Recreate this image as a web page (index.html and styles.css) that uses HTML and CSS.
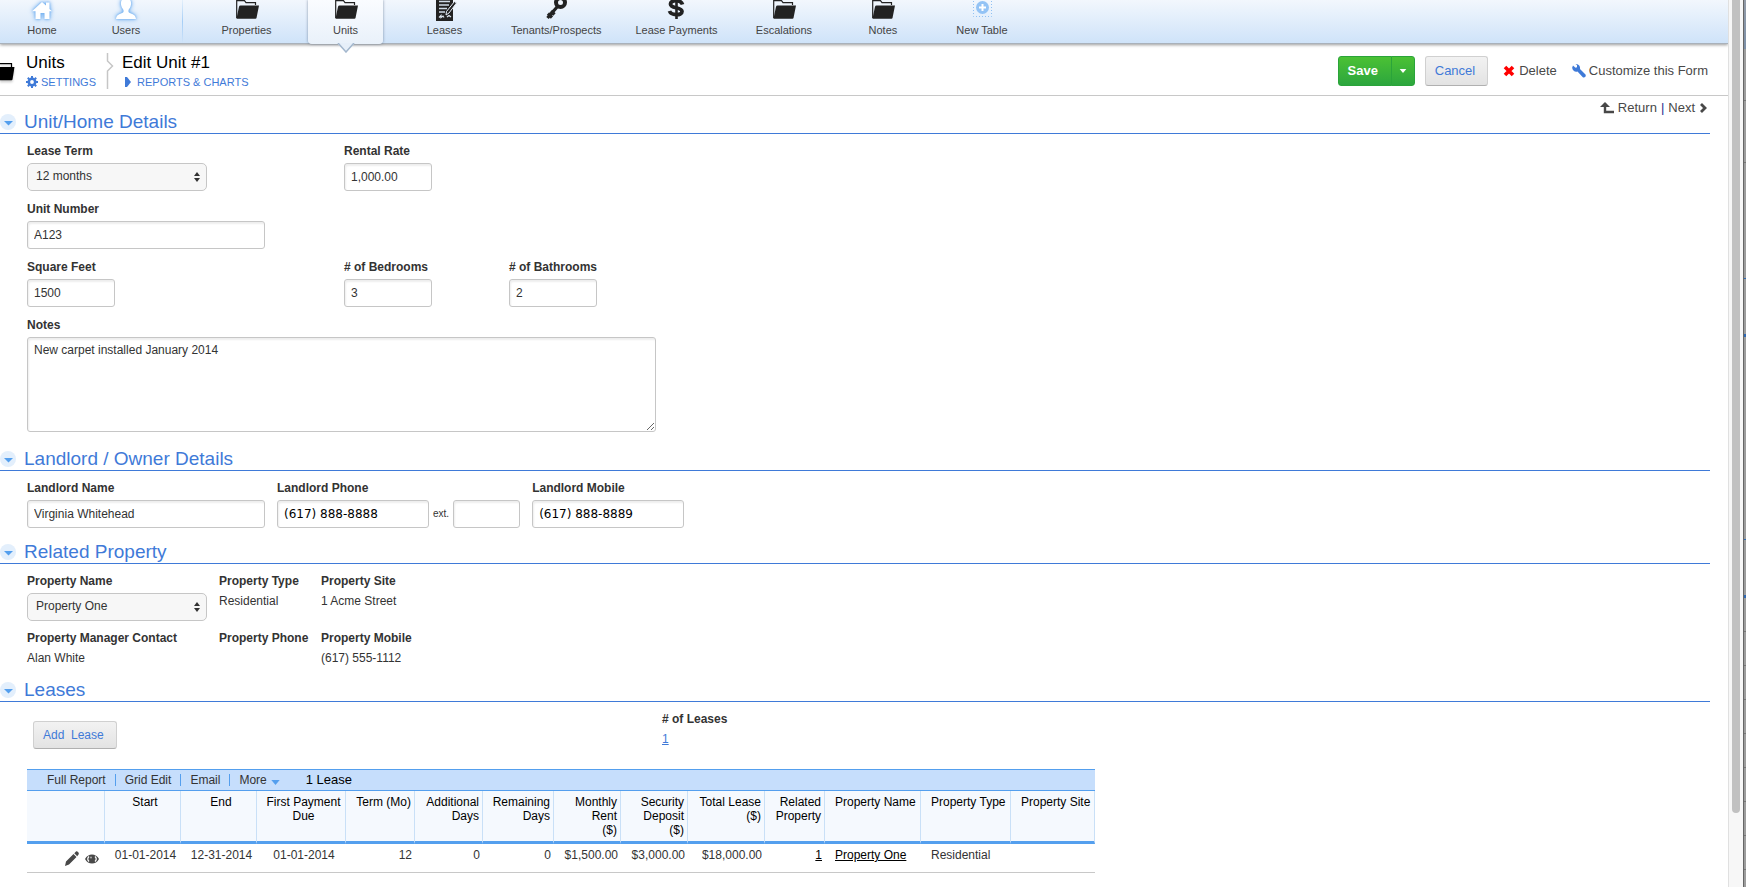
FILE: index.html
```html
<!DOCTYPE html>
<html lang="en">
<head>
  <meta charset="utf-8">
  <title>Edit Unit #1</title>
  <link rel="stylesheet" href="styles.css">
</head>
<body>

<!-- Shared icons -->
<svg class="sprite" aria-hidden="true">
  <symbol id="folder" viewBox="0 0 24 21">
    <path d="M1.700 18V.7H9.500l1.500 2h9.500V5" fill="none" stroke="currentColor" stroke-width="1.200"/>
    <path d="M5.500 5.500H24l-2.500 12.500q-.2.700-1 .7H1.500q1.200-6 2.500-12 .3-1.200 1.500-1.200z" fill="currentColor"/>
  </symbol>
  <symbol id="caret" viewBox="0 0 10 6">
    <path d="M0 0h10L5 6z" fill="currentColor"/>
  </symbol>
  <symbol id="toggle" viewBox="0 0 16 16">
    <circle cx="8" cy="8" r="8" fill="#e3effc"/>
    <path d="M4 7h9l-4.500 4.500z" fill="#549fee"/>
  </symbol>
  <symbol id="updown" viewBox="0 0 6 12">
    <path d="M0 5l3-4 3 4zM0 7l3 4 3-4z" fill="#333"/>
  </symbol>
</svg>

<div class="window">
  <div class="page">

    <nav class="tables">
      <a class="fixed" href="#">
        <svg class="glow" width="24" height="21" viewBox="0 0 24 21"><path d="M12 2l4 3.500V2.500h3.500V9l2.500 2.200h-2.500V19h-5v-6h-4v6h-5v-7.800H2z" fill="#fff"/></svg>
        Home
      </a>
      <a class="fixed" href="#">
        <svg class="glow" width="24" height="21" viewBox="0 0 24 21"><path d="M12-2c4 0 5.500 3 5 6.500-.3 2.500-1.500 4-2.500 5.500v2c2 2 7 1.500 7.500 7H2c.5-5.500 5.500-5 7.500-7v-2C8.500 8.500 7.300 7 7 4.500 6.500 1 8-2 12-2z" fill="#fff"/></svg>
        Users
      </a>
      <span class="divider"></span>
      <a class="tab" href="#"><svg width="24" height="21"><use href="#folder"/></svg>Properties</a>
      <a class="tab current" href="#"><svg width="24" height="21"><use href="#folder"/></svg>Units<svg class="pointer" width="18" height="10" viewBox="0 0 18 10"><path d="M0 0h18L9 9.500z" fill="#e6eff9"/><path d="M1 0l8 9 8-9" fill="none" stroke="#a3b7cd" stroke-width="1.500"/></svg></a>
      <a class="tab" href="#">
        <svg width="24" height="21" viewBox="0 0 24 21">
          <path d="M3-2h17v23H3z" fill="#222"/>
          <path d="M6 1.500h11M6 5h10M6 8.500h8M6 12h6" stroke="#cfdae6" stroke-width="1.500"/>
          <path d="M6 17.500l2-2v2l2-1.500 1 1.500M14 17l2-1.500 2 1.500" fill="none" stroke="#dde6f0" stroke-width="1.200"/>
          <path d="M21.500 1.500l2 1.500-7.500 10-3 2 .5-3.500z" fill="#222" stroke="#e6eef8" stroke-width="1"/>
        </svg>
        Leases
      </a>
      <a class="tab" href="#">
        <svg width="24" height="21" viewBox="0 0 24 21">
          <circle cx="16.500" cy="2.500" r="4.500" fill="none" stroke="#222" stroke-width="4"/>
          <path d="M13.500 6.500L3.500 18M4 13.500l4 4M7 11l3.500 3.500" stroke="#222" stroke-width="3.200"/>
        </svg>
        Tenants/Prospects
      </a>
      <a class="tab" href="#">
        <svg width="24" height="21" viewBox="0 0 24 21">
          <path d="M18.500 4.500C17-.5 6.500-.5 6.500 4c0 5 11.500 2.500 11.500 7.500 0 4.500-11 4-12.500-.5" fill="none" stroke="#222" stroke-width="3.800"/>
          <path d="M12.500-2v21" stroke="#222" stroke-width="2.600"/>
        </svg>
        Lease Payments
      </a>
      <a class="tab" href="#"><svg width="24" height="21"><use href="#folder"/></svg>Escalations</a>
      <a class="tab" href="#"><svg width="24" height="21"><use href="#folder"/></svg>Notes</a>
      <a class="tab" href="#">
        <svg width="24" height="21" viewBox="0 0 24 21">
          <path d="M3.500 1v15.500h18V0" fill="none" stroke="#8fc0f3" stroke-dasharray="1 2"/>
          <circle cx="12.500" cy="7.500" r="6.500" fill="#93c3f5"/>
          <path d="M12.500 4v7M9 7.500h7" stroke="#fff" stroke-width="2"/>
        </svg>
        New Table
      </a>
    </nav>

    <header class="title-bar">
      <svg class="title-icon" width="16" height="20" viewBox="8 0 16 20"><path d="M4 1.700h15.500V6" fill="none" stroke="#000" stroke-width="1.200"/><path d="M0 5h22.500L20.500 17.500q-.2.700-1 .7H0z"/></svg>
      <div class="crumb">
        <h1>Units</h1>
        <a href="#">
          <svg width="12" height="12" viewBox="0 0 12 12"><circle cx="6" cy="6" r="3.200" fill="none" stroke="#3f7ad8" stroke-width="2.600"/><path d="M6 0v2M6 10v2M0 6h2M10 6h2M1.800 1.800l1.400 1.400M8.800 8.800l1.400 1.400M1.800 10.200l1.400-1.400M8.800 3.200l1.400-1.400" stroke="#3f7ad8" stroke-width="2"/></svg>
          SETTINGS
        </a>
      </div>
      <svg class="crumb-line" width="8" height="36" viewBox="0 0 8 36"><path d="M1.500 0v8l5 5-5 5v18" fill="none" stroke="#c6c6c6" stroke-width="1.500"/></svg>
      <div class="crumb">
        <h1>Edit Unit #1</h1>
        <a href="#">
          <svg width="12" height="12" viewBox="0 0 12 12"><path d="M3 1h2l4 5-4 5H3z" fill="#3f7ad8"/></svg>
          REPORTS &amp; CHARTS
        </a>
      </div>
      <div class="actions">
        <div class="split">
          <button class="save" type="button">Save</button>
          <button class="save-more" type="button" aria-label="More save options"><svg width="8" height="4"><use href="#caret"/></svg></button>
        </div>
        <button class="button" type="button">Cancel</button>
        <a href="#"><svg width="12" height="12" viewBox="0 0 12 12"><path d="M2 2l8 8M10 2l-8 8" stroke="#f00" stroke-width="3.600"/></svg>Delete</a>
        <a class="customize" href="#"><svg width="14" height="14" viewBox="0 0 14 14"><path d="M1 1.500l2.500 2.300L5 3.300 5 1 3.500 0C6 0 8.500 1.500 8 5l5.500 5.500c1 2-1 3.800-2.700 2.700L5.500 7.500C3 8.500 0 6 .2 3.500z" fill="#3f7ad8"/></svg>Customize this Form</a>
      </div>
    </header>

    <main>
      <section>
        <div class="section-head first">
          <button class="toggle" type="button" aria-label="Collapse Unit/Home Details"><svg width="16" height="16"><use href="#toggle"/></svg></button>
          <h2>Unit/Home Details</h2>
          <div class="pager">
            <a href="#"><svg width="14" height="12" viewBox="0 0 14 12"><path d="M5 1.500V10h9" fill="none" stroke="#484848" stroke-width="2.400"/><path d="M0 5l5-5 5 5z" fill="#484848"/></svg>Return</a>
            <span>|</span>
            <a href="#">Next<svg width="8" height="12" viewBox="0 0 8 12"><path d="M2 2l4 4-4 4" fill="none" stroke="#484848" stroke-width="2.800"/></svg></a>
          </div>
        </div>
        <div class="fields unit-fields">
          <div class="field">
            <label for="term">Lease Term</label>
            <div class="select">
              <select id="term"><option>12 months</option></select>
              <svg width="6" height="12"><use href="#updown"/></svg>
            </div>
          </div>
          <div class="field">
            <label for="rate">Rental Rate</label>
            <input class="short" id="rate" type="text" value="1,000.00">
          </div>
          <div class="field row-start">
            <label for="number">Unit Number</label>
            <input class="long" id="number" type="text" value="A123">
          </div>
          <div class="field row-start">
            <label for="sqft">Square Feet</label>
            <input class="short" id="sqft" type="text" value="1500">
          </div>
          <div class="field">
            <label for="bedrooms"># of Bedrooms</label>
            <input class="short" id="bedrooms" type="text" value="3">
          </div>
          <div class="field">
            <label for="bathrooms"># of Bathrooms</label>
            <input class="short" id="bathrooms" type="text" value="2">
          </div>
          <div class="field full-row">
            <label for="notes">Notes</label>
            <textarea id="notes">New carpet installed January 2014</textarea>
          </div>
        </div>
      </section>

      <section>
        <div class="section-head">
          <button class="toggle" type="button" aria-label="Collapse Landlord / Owner Details"><svg width="16" height="16"><use href="#toggle"/></svg></button>
          <h2>Landlord / Owner Details</h2>
        </div>
        <div class="fields landlord-fields">
          <div class="field">
            <label for="landlord">Landlord Name</label>
            <input class="long" id="landlord" type="text" value="Virginia Whitehead">
          </div>
          <div class="field">
            <label for="phone">Landlord Phone</label>
            <div class="phone-row">
              <input class="phone" id="phone" type="tel" value="(617) 888-8888">
              <label class="ext" for="ext">ext.</label>
              <input class="ext-box" id="ext" type="text">
            </div>
          </div>
          <div class="field">
            <label for="mobile">Landlord Mobile</label>
            <input class="phone" id="mobile" type="tel" value="(617) 888-8889">
          </div>
        </div>
      </section>

      <section>
        <div class="section-head">
          <button class="toggle" type="button" aria-label="Collapse Related Property"><svg width="16" height="16"><use href="#toggle"/></svg></button>
          <h2>Related Property</h2>
        </div>
        <div class="fields property-fields">
          <div class="field">
            <label for="property">Property Name</label>
            <div class="select">
              <select id="property"><option>Property One</option></select>
              <svg width="6" height="12"><use href="#updown"/></svg>
            </div>
          </div>
          <div class="field"><b>Property Type</b><span>Residential</span></div>
          <div class="field"><b>Property Site</b><span>1 Acme Street</span></div>
          <div class="field"><b>Property Manager Contact</b><span>Alan White</span></div>
          <div class="field"><b>Property Phone</b></div>
          <div class="field"><b>Property Mobile</b><span>(617) 555-1112</span></div>
        </div>
      </section>

      <section>
        <div class="section-head">
          <button class="toggle" type="button" aria-label="Collapse Leases"><svg width="16" height="16"><use href="#toggle"/></svg></button>
          <h2>Leases</h2>
        </div>
        <div class="fields lease-fields">
          <div><button class="button add" type="button">Add &nbsp;Lease</button></div>
          <div class="field"><b># of Leases</b><a href="#">1</a></div>
        </div>

        <div class="report">
          <div class="report-bar">
            <a href="#">Full Report</a>
            <a href="#">Grid Edit</a>
            <a href="#">Email</a>
            <a href="#">More<svg width="9" height="5"><use href="#caret"/></svg></a>
            <span class="count">1 Lease</span>
          </div>
          <table>
            <colgroup>
              <col class="w78"><col class="w76"><col class="w76"><col class="w89"><col class="w69"><col class="w68"><col class="w71">
              <col class="w67"><col class="w67"><col class="w77"><col class="w60"><col class="w96"><col class="w90"><col class="w84">
            </colgroup>
            <thead>
              <tr>
                <th></th>
                <th class="mid">Start</th>
                <th class="mid">End</th>
                <th class="mid">First Payment Due</th>
                <th class="num">Term (Mo)</th>
                <th class="num">Additional Days</th>
                <th class="num">Remaining Days</th>
                <th class="num">Monthly Rent<br>($)</th>
                <th class="num">Security Deposit<br>($)</th>
                <th class="num">Total Lease ($)</th>
                <th class="num">Related Property</th>
                <th>Property Name</th>
                <th>Property Type</th>
                <th>Property Site</th>
              </tr>
            </thead>
            <tbody>
              <tr>
                <td>
                  <div class="row-icons">
                    <a href="#" aria-label="Edit"><svg width="14" height="15" viewBox="0 0 14 15"><path d="M0 15l1-4.500L8.500 3l3 3L4 13.500zM9.300 2.200L11 .5c1-.8 3.500 1.500 2.700 2.700l-1.500 2z" fill="#484848"/></svg></a>
                    <a href="#" aria-label="View"><svg width="14" height="10" viewBox="0 0 14 10"><path d="M0 5c3-6 11-6 14 0-3 6-11 6-14 0z" fill="#484848"/><path d="M4 2.500C2.500 4 2.500 6 4 7.500M10 2.500c1.500 1.500 1.500 3.500 0 5" fill="none" stroke="#fff" stroke-width="1.200"/><circle cx="6" cy="3.500" r="1" fill="#aaa"/></svg></a>
                  </div>
                </td>
                <td class="mid">01-01-2014</td>
                <td class="mid">12-31-2014</td>
                <td class="mid">01-01-2014</td>
                <td class="num">12</td>
                <td class="num">0</td>
                <td class="num">0</td>
                <td class="num">$1,500.00</td>
                <td class="num">$3,000.00</td>
                <td class="num">$18,000.00</td>
                <td class="num"><a href="#">1</a></td>
                <td><a href="#">Property One</a></td>
                <td>Residential</td>
                <td></td>
              </tr>
            </tbody>
          </table>
        </div>
      </section>
    </main>
  </div>

  <div class="scrollbar"><div class="thumb"></div></div>

  <!-- Dimmed page behind the window -->
  <div class="behind" aria-hidden="true"></div>
</div>

</body>
</html>
```
FILE: styles.css
```css
* {
  box-sizing: border-box;
}
body {
  margin: 0;
  background: #fff;
  color: #333;
  font: 12px/16px "Liberation Sans", Arial, sans-serif;
}
h1, h2 {
  margin: 0;
  font-weight: normal;
}
a {
  color: inherit;
  text-decoration: none;
}
svg {
  display: block;
  flex: none;
}
button, input, select, textarea {
  font: inherit;
  color: inherit;
}
.sprite {
  position: absolute;
  width: 0;
  height: 0;
}
.window {
  display: flex;
  min-height: 100vh;
}
.page {
  flex: 1;
  min-width: 0;
}

/* Table navigation */
.tables {
  display: flex;
  height: 44px;
  background: linear-gradient(#f2f7fd, #cfe3f9);
  border-bottom: 1px solid #a9b1ba;
  box-shadow: 0 1px 3px rgba(0, 0, 0, .4);
  font-size: 11px;
  line-height: 14px;
  color: #444;
}
.tables a {
  display: flex;
  flex-direction: column;
  align-items: center;
  gap: 2px;
  white-space: nowrap;
}
.tables .fixed {
  width: 84px;
}
.tables .glow {
  filter: drop-shadow(0 0 1px #6faef0) drop-shadow(0 0 2px #6faef0);
}
.tables .divider {
  width: 1px;
  margin: 0 14px;
  background: linear-gradient(#e3effb, #a6cef6, #cfe3f9);
}
.tables .tab {
  min-width: 75px;
  height: 44px;
  margin: 0 12px;
  padding: 0 5px;
}
.tables .tab svg {
  color: #222;
}
.tables .current {
  position: relative;
  background: linear-gradient(#fafcff, #e9f1fa);
  border-radius: 0 0 4px 4px;
  box-shadow: 0 0 3px rgba(60, 80, 110, .6);
}
.tables .current .pointer {
  position: absolute;
  top: 43px;
}

/* Title bar */
.title-bar {
  display: flex;
  height: 52px;
  border-bottom: 1px solid #c8c8c8;
}
.title-icon {
  margin: 18px 10px 0 0;
  filter: drop-shadow(0 2px 1px #ccc);
}
.crumb {
  padding-top: 9px;
}
.crumb h1 {
  font-size: 17px;
  line-height: 20px;
  color: #000;
}
.crumb a {
  display: flex;
  align-items: center;
  gap: 3px;
  font-size: 11px;
  line-height: 18px;
  color: #3f7ad8;
}
.crumb-line {
  margin: 9px 8px 0 10px;
}
.actions {
  display: flex;
  align-items: center;
  margin-left: auto;
  padding: 0 20px 1px 0;
  height: 54px;
  font-size: 13px;
  color: #484848;
}
.actions a {
  display: flex;
  align-items: center;
  gap: 4px;
  margin-left: 15px;
}
.actions .customize {
  gap: 3px;
}
.split {
  display: flex;
  margin-right: 10px;
}
.split button {
  height: 30px;
  padding: 0;
  border: 1px solid #2aa43a;
  background: linear-gradient(#4bc134, #2ca63e);
  color: #fff;
}
.split .save {
  width: 54px;
  padding-right: 4px;
  border-radius: 3px 0 0 3px;
  font-weight: bold;
}
.split .save-more {
  display: flex;
  align-items: center;
  justify-content: center;
  width: 24px;
  margin-left: -1px;
  border-radius: 0 3px 3px 0;
}
.button {
  height: 30px;
  padding: 0 12px 0 9px;
  border: 1px solid #d0d0d0;
  border-bottom-color: #b0b0b0;
  border-radius: 3px;
  background: linear-gradient(#f2f2f2, #e3e3e3);
  color: #3f7ad8;
}

/* Form sections */
main {
  padding-right: 18px;
}
.section-head {
  display: flex;
  align-items: flex-end;
  height: 36px;
  border-bottom: 1px solid #3f7ad8;
}
.section-head.first {
  height: 38px;
}
.section-head h2 {
  margin-left: 8px;
  font-size: 19px;
  line-height: 23px;
  color: #3f7ad8;
}
.toggle {
  padding: 0 0 3px;
  border: 0;
  background: none;
}
.pager {
  display: flex;
  align-self: flex-start;
  gap: 4px;
  margin-left: auto;
  padding: 4px 3px 0 0;
  font-size: 13px;
  color: #484848;
}
.pager a {
  display: flex;
  align-items: center;
  gap: 4px;
}
.pager span {
  color: #2a2a90;
}
.fields {
  display: grid;
  justify-content: start;
  row-gap: 9px;
  padding: 9px 0 0 27px;
}
.unit-fields {
  grid-template-columns: 317px 165px 165px;
  row-gap: 10px;
  padding-bottom: 3px;
}
.landlord-fields {
  grid-template-columns: repeat(3, auto);
  column-gap: 12px;
}
.property-fields {
  grid-template-columns: 192px 102px auto;
}
.lease-fields {
  grid-template-columns: 635px auto;
}
.row-start {
  grid-column-start: 1;
}
.full-row {
  grid-column: 1 / -1;
}
.field {
  display: flex;
  flex-direction: column;
  align-items: flex-start;
  gap: 4px;
}
.field label {
  font-weight: bold;
}
.field a {
  color: #3f7ad8;
  text-decoration: underline;
}
input, textarea {
  padding: 0 6px;
  border: 1px solid #c6c6c6;
  border-radius: 3px;
  background: #fff;
  box-shadow: inset 1px 2px 2px #eee;
}
input {
  height: 28px;
}
.short {
  width: 88px;
}
.long {
  width: 238px;
}
textarea {
  width: 629px;
  height: 95px;
  padding: 4px 6px;
}
.select {
  position: relative;
}
.select select {
  appearance: none;
  display: block;
  width: 180px;
  height: 28px;
  padding: 0 20px 2px 8px;
  border: 1px solid #c6c6c6;
  border-radius: 5px;
  background: #f7f7f7;
}
.select svg {
  position: absolute;
  top: 8px;
  right: 7px;
  pointer-events: none;
}
.phone-row {
  display: flex;
  align-items: center;
  gap: 4px;
}
.phone {
  width: 152px;
  font-family: "DejaVu Sans", Verdana, sans-serif;
  color: #000;
}
.phone-row .ext {
  font-size: 10px;
  font-weight: normal;
}
.ext-box {
  width: 67px;
}
.button.add {
  height: 28px;
  margin: 10px 0 0 6px;
  font-size: 12px;
}

/* Leases report */
.report {
  width: 1068px;
  margin: 20px 0 0 27px;
}
.report-bar {
  display: flex;
  align-items: center;
  height: 21px;
  padding-left: 11px;
  border-top: 1px solid #549fee;
  background: #c6defc;
}
.report-bar a {
  display: flex;
  align-items: center;
  gap: 4px;
  padding: 0 9px;
}
.report-bar a + a {
  line-height: 12px;
  border-left: 1px solid #549fee;
}
.report-bar svg {
  margin-top: 4px;
  color: #549fee;
}
.count {
  margin-left: 17px;
  font-size: 13px;
  color: #000;
}
table {
  table-layout: fixed;
  width: 100%;
  border-collapse: separate;
  border-spacing: 0;
  border-top: 1px solid #549fee;
}
th, td {
  padding: 4px 3px 0 10px;
  text-align: left;
  vertical-align: top;
  white-space: nowrap;
}
th {
  height: 53px;
  border-right: 1px solid #c9e0f7;
  border-bottom: 3px solid #549fee;
  background: #f5f9fe;
  font-weight: normal;
  line-height: 14px;
  color: #000;
  white-space: normal;
}
th:nth-child(n + 12) {
  white-space: nowrap;
}
td {
  height: 29px;
  padding-top: 3px;
  border-bottom: 1px solid #c8c8c8;
}
th.num, td.num {
  padding-left: 0;
  text-align: right;
}
th.mid, td.mid {
  padding-left: 8px;
  text-align: center;
}
td a {
  color: #000;
  text-decoration: underline;
}
.row-icons {
  display: flex;
  align-items: center;
  justify-content: flex-end;
  gap: 6px;
  padding: 4px 3px 0 0;
}
.w60 { width: 60px; }
.w67 { width: 67px; }
.w68 { width: 68px; }
.w69 { width: 69px; }
.w71 { width: 71px; }
.w76 { width: 76px; }
.w77 { width: 77px; }
.w78 { width: 78px; }
.w84 { width: 84px; }
.w89 { width: 89px; }
.w90 { width: 90px; }
.w96 { width: 96px; }

/* Window edge */
.scrollbar {
  width: 15px;
  padding: 0 3px;
  border-left: 1px solid #e0e0e0;
  background: #f7f7f7;
}
.thumb {
  width: 8px;
  height: 813px;
  border-radius: 0 0 4px 4px;
  background: #c1c1c1;
}
.behind {
  width: 3px;
  border-left: 1px solid #666;
  background:
    linear-gradient(#949ca8, #7c90a8) 0 0 / 3px 49px no-repeat,
    linear-gradient(#777, #777) 0 100px / 3px 1px no-repeat,
    linear-gradient(#777, #777) 0 162px / 3px 1px no-repeat,
    linear-gradient(#2f69b3, #2f69b3) 0 278px / 3px 1px no-repeat,
    linear-gradient(#2f69b3, #2f69b3) 0 334px / 3px 3px no-repeat,
    linear-gradient(#2f69b3, #2f69b3) 0 539px / 3px 1px no-repeat,
    linear-gradient(#2f69b3, #2f69b3) 0 595px / 3px 3px no-repeat,
    repeating-linear-gradient(#9d9d9d 0 33px, #777 33px 34px) 0 598px / 3px 289px no-repeat,
    #9d9d9d;
}
```
